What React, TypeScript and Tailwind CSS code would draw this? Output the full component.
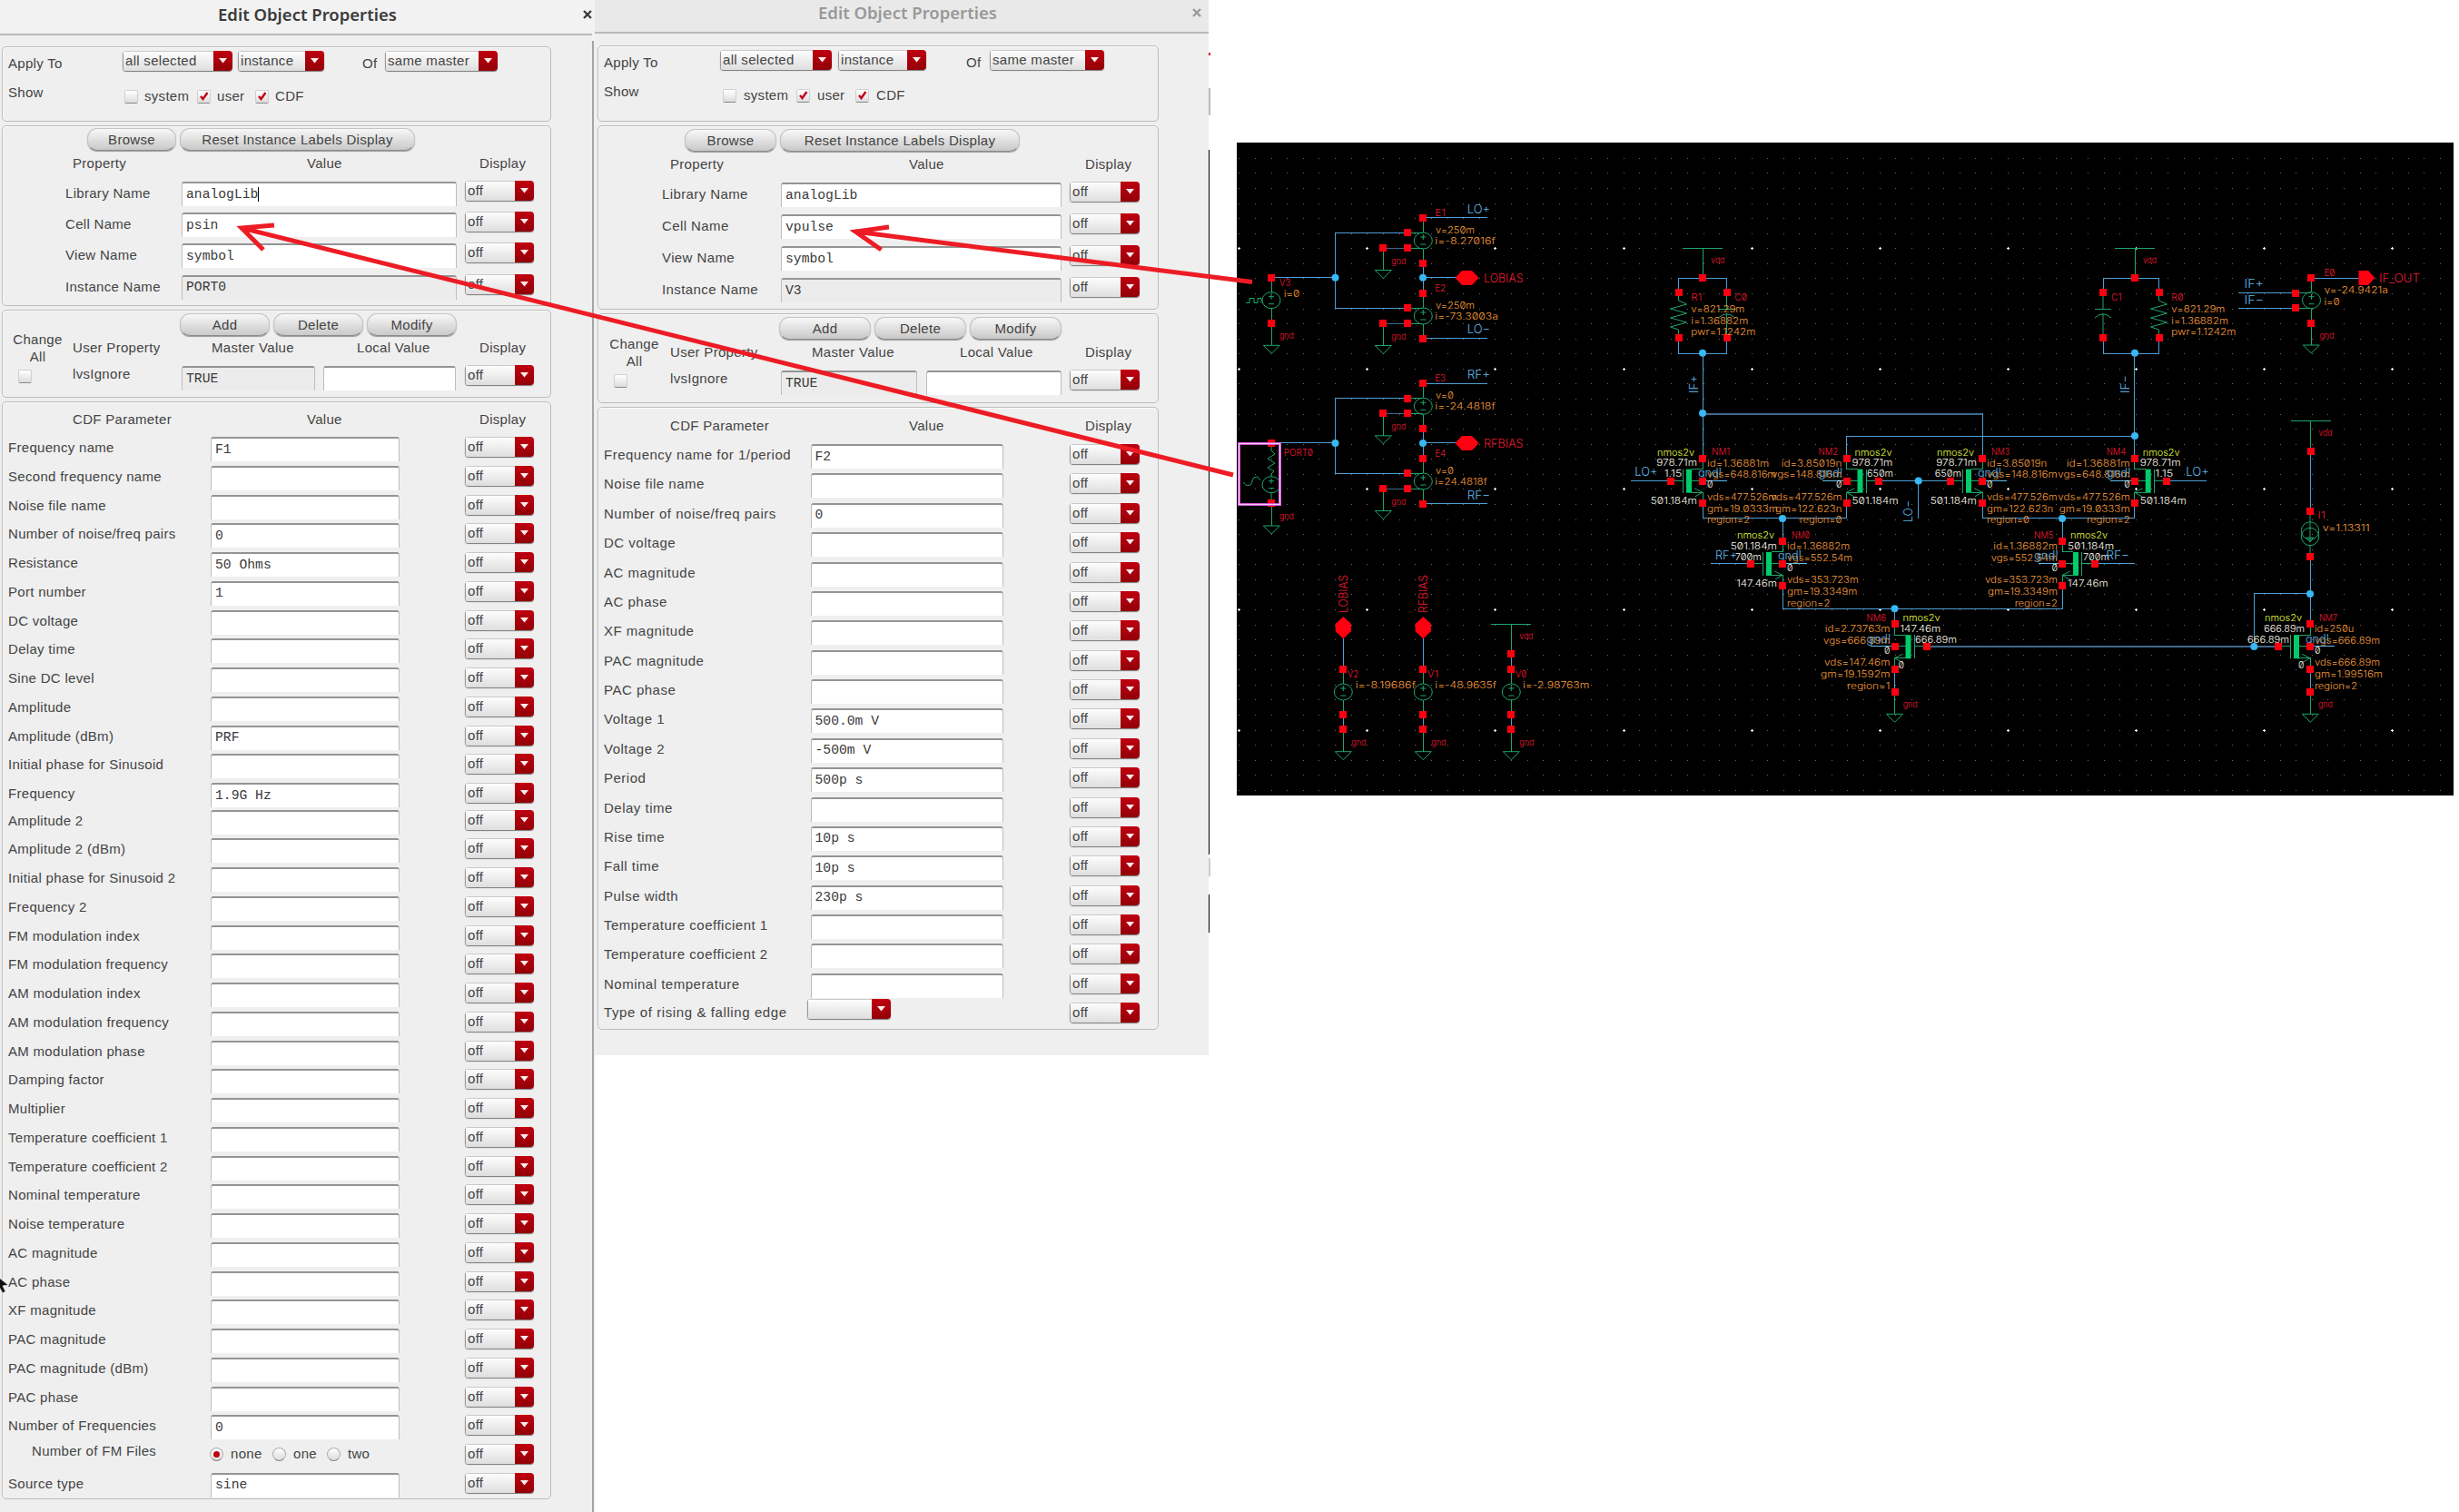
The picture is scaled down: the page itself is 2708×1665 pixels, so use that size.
import React from "react";

/* ---------- form widgets ---------- */

function Combo({ text, w, className = "" }: { text: string; w: string; className?: string }) {
  return (
    <div className={`flex h-[22px] shrink-0 overflow-hidden rounded-[4px] shadow-[0_1px_1px_#777] ${w} ${className}`}>
      <div className="flex-1 overflow-hidden border-t border-l border-t-[#c9c9c9] border-l-[#9a9a9a] bg-linear-to-b from-[#fdfdfd] to-[#dedede] pl-[2px] leading-[20px] whitespace-nowrap">
        {text}
      </div>
      <div className="flex w-[21px] items-center justify-center bg-linear-to-b from-[#c00010] to-[#920008]">
        <svg width="9" height="6" viewBox="0 0 9 6">
          <path d="M0 0H9L4.5 5.5Z" fill="#fbeaea" />
        </svg>
      </div>
    </div>
  );
}

function Field({ value = "", w, disabled = false, caret = false, className = "" }: { value?: string; w: string; disabled?: boolean; caret?: boolean; className?: string }) {
  return (
    <div
      className={`flex h-[27px] shrink-0 items-center overflow-hidden rounded-t-[3px] border-x border-t-2 border-x-[#bdbdbd] border-t-[#949494] pb-[2px] pl-[4px] font-['Liberation_Mono',monospace] text-[14.7px] tracking-normal whitespace-pre text-[#3a3a3a] ${disabled ? "bg-[#ececec]" : "bg-white"} ${w} ${className}`}
    >
      {value}
      {caret && <span className="h-[16px] w-px bg-black" />}
    </div>
  );
}

function Check({ on = false, className = "" }: { on?: boolean; className?: string }) {
  return (
    <div className={`size-[15px] shrink-0 rounded-[2px] border border-[#cfcfcf] border-b-[#8a8a8a] bg-linear-to-b from-white to-[#dcdcdc] ${className}`}>
      {on && (
        <svg width="13" height="13" viewBox="0 0 13 13">
          <path d="M3 6L5.5 9L10.5 2" fill="none" stroke="#c4001a" strokeWidth="2.4" />
        </svg>
      )}
    </div>
  );
}

function Radio({ on = false }: { on?: boolean }) {
  return (
    <div className="flex size-[15px] items-center justify-center rounded-full border border-[#b0b0b0] border-b-[#808080] bg-linear-to-b from-white to-[#dcdcdc]">
      {on && <div className="size-[7px] rounded-full bg-[#c00010]" />}
    </div>
  );
}

function Btn({ text, w }: { text: string; w: string }) {
  return (
    <div className={`flex h-[25px] shrink-0 items-center justify-center rounded-[11px] border border-[#c4c4c4] border-b-[#8c8c8c] bg-linear-to-b from-[#f8f8f8] to-[#c9c9c9] whitespace-nowrap shadow-[0_1px_1px_#999] ${w}`}>
      {text}
    </div>
  );
}

/* ---------- dialogs ---------- */

type Skin = {
  offW: string;
  groups: string; g1: string; g2: string; g3: string; g4: string;
  apply: string; comboA: string; comboB: string; comboC: string;
  show: string; opt: string;
  btns: string; browse: string; reset: string;
  head: string; propRow: string; propLabel: string; propField: string;
  left: string; userBtns: string; three: string; userHead: string; userRow: string; master: string; local: string;
  parHead: string; parCols: string; parField: string; parRow: string; parLabel: string;
};

const skinA: Skin = {
  offW: "w-[76px]",
  groups: "ml-[2px] w-[605px] pt-[12px]",
  g1: "h-[83px]", g2: "h-[199px] pt-[2px]", g3: "h-[97px]", g4: "h-[1209px] pt-[9px]",
  apply: "grid-cols-[132px_127px_137px_25px_124px] pt-[4px]",
  comboA: "w-[121px]", comboB: "w-[95px]", comboC: "w-[124px]",
  show: "grid-cols-[134px_80px_64px_60px] pt-[12px]", opt: "gap-[7px]",
  btns: "h-[29px] pl-[93px] gap-[4px]", browse: "w-[98px]", reset: "w-[259px]",
  head: "h-[29px] grid-cols-[258px_190px_60px] pl-[77px]",
  propRow: "h-[34.2px] grid-cols-[197px_312px_76px]", propLabel: "pl-[69px]", propField: "w-[303px]",
  left: "w-[77px] pt-[22px]", userBtns: "h-[31px] pl-[118px] gap-[4px]", three: "w-[99px]",
  userHead: "h-[29px] grid-cols-[153px_160px_135px_60px]",
  userRow: "grid-cols-[120px_156px_156px_76px]", master: "w-[147px]", local: "w-[146px]",
  parHead: "h-[29px] grid-cols-[258px_190px_60px] pl-[77px]",
  parCols: "grid-cols-[229px_280px_76px]", parField: "w-[208px]", parRow: "h-[31.75px]", parLabel: "mt-[2px] pl-[6px]",
};

const skinB: Skin = {
  offW: "w-[77px]",
  groups: "ml-[3px] w-[618px] pt-[13px]",
  g1: "h-[84px]", g2: "h-[203px] pt-[3px]", g3: "h-[99px]", g4: "h-[686px] pt-[10px]",
  apply: "grid-cols-[134px_130px_141px_26px_126px] pt-[4px]",
  comboA: "w-[123px]", comboB: "w-[97px]", comboC: "w-[126px]",
  show: "grid-cols-[137px_81px_65px_60px] pt-[12px]", opt: "gap-[8px]",
  btns: "h-[29px] pl-[95px] gap-[4px]", browse: "w-[101px]", reset: "w-[264px]",
  head: "h-[29px] grid-cols-[263px_194px_60px] pl-[79px]",
  propRow: "h-[35px] grid-cols-[201px_318px_77px]", propLabel: "pl-[70px] tracking-[0.4px]", propField: "w-[309px]",
  left: "w-[79px] pt-[23px]", userBtns: "h-[32px] pl-[120px] gap-[4px]", three: "w-[101px]",
  userHead: "h-[29px] grid-cols-[156px_163px_138px_60px]",
  userRow: "grid-cols-[122px_160px_158px_77px]", master: "w-[150px]", local: "w-[149px]",
  parHead: "h-[30px] grid-cols-[263px_194px_60px] pl-[79px]",
  parCols: "grid-cols-[233.5px_285.5px_77px]", parField: "w-[212px]", parRow: "h-[32.38px]", parLabel: "mt-[2px] pl-[6px] tracking-[0.5px]",
};

function Group({ className, children }: { className: string; children: React.ReactNode }) {
  return (
    <section className={`shrink-0 rounded-[5px] border border-[#bcbcbc] shadow-[inset_1px_1px_0_#fafafa] ${className}`}>
      {children}
    </section>
  );
}

type Param = { label: string; value?: string; kind?: "radio" | "combo" };

function ParamRow({ p, s, short }: { p: Param; s: Skin; short: boolean }) {
  return (
    <div className={`grid items-start ${s.parCols} ${short ? "h-[29.6px]" : s.parRow}`}>
      <span className={p.kind === "radio" ? "-mt-[2px] pl-[32px]" : p.kind === "combo" ? "mt-px pl-[6px] tracking-[0.6px]" : s.parLabel}>{p.label}</span>
      {p.kind === "radio" ? (
        <div className="-ml-px flex items-center pt-px">
          <Radio on /><span className="w-[47px] pl-[8px]">none</span>
          <span className="w-[7px]" />
          <Radio /><span className="w-[37px] pl-[8px]">one</span>
          <span className="w-[8px]" />
          <Radio /><span className="pl-[8px]">two</span>
        </div>
      ) : p.kind === "combo" ? (
        <Combo text="" w="w-[92px]" className="-mt-[4px] -ml-[4px]" />
      ) : (
        <Field value={p.value} w={s.parField} />
      )}
      <Combo text="off" w={s.offW} />
    </div>
  );
}

function Dialog({ s, active, name, cell, instance, params, shortRow }: { s: Skin; active: boolean; name: string; cell: string; instance: string; params: Param[]; shortRow: number }) {
  const props = [
    { label: "Library Name", value: "analogLib" },
    { label: "Cell Name", value: cell },
    { label: "View Name", value: "symbol" },
    { label: "Instance Name", value: instance },
  ];
  return (
    <div className="flex flex-col font-['Liberation_Sans',Arial,sans-serif] text-[15px] leading-[20px] tracking-[0.3px] text-[#444]">
      <header
        className={`flex shrink-0 items-center border-b-2 border-[#b9b9b9] font-['Noto_Sans',sans-serif] text-[18.5px] tracking-normal ${active ? "h-[39px] bg-[#f2f2f2] pb-[5px] pl-[240px] font-semibold text-[#3b3b3b]" : "h-[37px] bg-[#e9e9e9] pb-[7px] pl-[246px] font-semibold text-[#999]"}`}
      >
        <h1 className="w-[400px] whitespace-nowrap">{name}</h1>
        <svg width="10" height="10" viewBox="0 0 10 10" className={active ? "ml-[4px]" : "ml-[12px]"}>
          <path d="M1 1L9 9M9 1L1 9" stroke="currentColor" strokeWidth="2.4" />
        </svg>
      </header>
      <div className={`flex flex-col gap-[4px] ${s.groups}`}>
        <Group className={s.g1}>
          <div className={`grid ${s.apply}`}>
            <span className="pt-[4px] pl-[6px]">Apply To</span>
            <Combo text="all selected" w={s.comboA} />
            <Combo text="instance" w={s.comboB} />
            <span className="pt-[4px]">Of</span>
            <Combo text="same master" w={s.comboC} />
          </div>
          <div className={`grid ${s.show}`}>
            <span className="pl-[6px]">Show</span>
            <label className={`flex items-center pt-[4px] ${s.opt}`}><Check />system</label>
            <label className={`flex items-center pt-[4px] ${s.opt}`}><Check on />user</label>
            <label className={`flex items-center pt-[4px] ${s.opt}`}><Check on />CDF</label>
          </div>
        </Group>

        <Group className={s.g2}>
          <div className={`flex ${s.btns}`}>
            <Btn text="Browse" w={s.browse} />
            <Btn text="Reset Instance Labels Display" w={s.reset} />
          </div>
          <div className={`grid ${s.head}`}>
            <span>Property</span><span>Value</span><span>Display</span>
          </div>
          {props.map((p, i) => (
            <div key={p.label} className={`grid items-start ${s.propRow}`}>
              <span className={`mt-[4px] ${s.propLabel}`}>{p.label}</span>
              <Field value={p.value} w={s.propField} disabled={i === 3} caret={active && i === 0} className="mt-px" />
              <Combo text="off" w={s.offW} />
            </div>
          ))}
        </Group>

        <Group className={`flex ${s.g3}`}>
          <div className={`shrink-0 text-center leading-[19px] ${s.left}`}>
            Change<br />All
            <Check className="mt-[5px] ml-[17px]" />
          </div>
          <div className="pt-[3px]">
            <div className={`flex ${s.userBtns}`}>
              <Btn text="Add" w={s.three} /><Btn text="Delete" w={s.three} /><Btn text="Modify" w={s.three} />
            </div>
            <div className={`-mt-[3px] grid ${s.userHead}`}>
              <span>User Property</span><span>Master Value</span><span>Local Value</span><span>Display</span>
            </div>
            <div className={`grid items-start ${s.userRow}`}>
              <span>lvsIgnore</span>
              <Field value="TRUE" w={s.master} disabled className="mt-px" />
              <Field w={s.local} className="mt-px" />
              <Combo text="off" w={s.offW} />
            </div>
          </div>
        </Group>

        <Group className={s.g4}>
          <div className={`grid ${s.parHead}`}>
            <span>CDF Parameter</span><span>Value</span><span>Display</span>
          </div>
          {params.map((p, i) => (
            <ParamRow key={p.label} p={p} s={s} short={i === shortRow} />
          ))}
        </Group>
      </div>
    </div>
  );
}

const portParams: Param[] = [
  { label: "Frequency name", value: "F1" },
  { label: "Second frequency name" },
  { label: "Noise file name" },
  { label: "Number of noise/freq pairs", value: "0" },
  { label: "Resistance", value: "50 Ohms" },
  { label: "Port number", value: "1" },
  { label: "DC voltage" },
  { label: "Delay time" },
  { label: "Sine DC level" },
  { label: "Amplitude" },
  { label: "Amplitude (dBm)", value: "PRF" },
  { label: "Initial phase for Sinusoid" },
  { label: "Frequency", value: "1.9G Hz" },
  { label: "Amplitude 2" },
  { label: "Amplitude 2 (dBm)" },
  { label: "Initial phase for Sinusoid 2" },
  { label: "Frequency 2" },
  { label: "FM modulation index" },
  { label: "FM modulation frequency" },
  { label: "AM modulation index" },
  { label: "AM modulation frequency" },
  { label: "AM modulation phase" },
  { label: "Damping factor" },
  { label: "Multiplier" },
  { label: "Temperature coefficient 1" },
  { label: "Temperature coefficient 2" },
  { label: "Nominal temperature" },
  { label: "Noise temperature" },
  { label: "AC magnitude" },
  { label: "AC phase" },
  { label: "XF magnitude" },
  { label: "PAC magnitude" },
  { label: "PAC magnitude (dBm)" },
  { label: "PAC phase" },
  { label: "Number of Frequencies", value: "0" },
  { label: "Number of FM Files", kind: "radio" },
  { label: "Source type", value: "sine" },
];

const pulseParams: Param[] = [
  { label: "Frequency name for 1/period", value: "F2" },
  { label: "Noise file name" },
  { label: "Number of noise/freq pairs", value: "0" },
  { label: "DC voltage" },
  { label: "AC magnitude" },
  { label: "AC phase" },
  { label: "XF magnitude" },
  { label: "PAC magnitude" },
  { label: "PAC phase" },
  { label: "Voltage 1", value: "500.0m V" },
  { label: "Voltage 2", value: "-500m V" },
  { label: "Period", value: "500p s" },
  { label: "Delay time" },
  { label: "Rise time", value: "10p s" },
  { label: "Fall time", value: "10p s" },
  { label: "Pulse width", value: "230p s" },
  { label: "Temperature coefficient 1" },
  { label: "Temperature coefficient 2" },
  { label: "Nominal temperature" },
  { label: "Type of rising & falling edge", kind: "combo" },
];

/* ---------- schematic ---------- */

const WIRE = "#4d9fd6";
const DIM = "#41688c";
const GRN = "#1ea56c";
const RED = "#ec1832";
const AMB = "#f39a3c";
const WHT = "#fbf6ea";
const YEL = "#e2fa42";
const BLU = "#62b8ea";

function T({ x, e, y, t, c = AMB, s = 10 }: { x: number; e: number; y: number; t: string; c?: string; s?: number }) {
  return (
    <text x={x} y={y + s * 0.36} fontSize={s} fill={c} textLength={e - x} lengthAdjust="spacingAndGlyphs">
      {t}
    </text>
  );
}

function VT({ x, y, h, t, c, s = 13 }: { x: number; y: number; h: number; t: string; c: string; s?: number }) {
  return (
    <text transform={`translate(${x + s * 0.36} ${y}) rotate(-90)`} fontSize={s} fill={c} textLength={h} lengthAdjust="spacingAndGlyphs">
      {t}
    </text>
  );
}

const L = ({ d, c = WIRE, w = 1 }: { d: string; c?: string; w?: number }) => (
  <path d={d} fill="none" stroke={c} strokeWidth={w} shapeRendering="crispEdges" />
);
const Pin = ({ x, y }: { x: number; y: number }) => <rect x={Math.round(x - 4)} y={Math.round(y - 4)} width="8" height="8" fill="#ff0010" />;
const Dot = ({ x, y }: { x: number; y: number }) => <circle cx={x} cy={y} r="4" fill="#38b8f4" />;

function Gnd({ x, y, top, lx }: { x: number; y: number; top: number; lx: number }) {
  return (
    <g>
      <L d={`M${x} ${top}V${y}`} c={GRN} />
      <path d={`M${x - 9} ${y}H${x + 9}L${x} ${y + 9}Z`} fill="none" stroke={GRN} />
      <T x={lx} e={lx + 16} y={y - 10.3} t="gnd" c={RED} s={9.5} />
    </g>
  );
}

function Vdd({ x, y, pin }: { x: number; y: number; pin: number }) {
  return (
    <g>
      <L d={`M${x - 22} ${y}H${x + 22}M${x} ${y}V${pin}`} c={GRN} />
      <T x={x + 9} e={x + 24} y={y + 13.5} t="vdd" c={RED} s={9.5} />
      <Pin x={x} y={pin} />
    </g>
  );
}

function Source({ x, y }: { x: number; y: number }) {
  return (
    <g fill="none" stroke={GRN}>
      <ellipse cx={x} cy={y} rx="10" ry="9" />
      <path d={`M${x - 3} ${y - 4}H${x + 3}M${x} ${y - 7}V${y - 1}M${x - 3} ${y + 4}H${x + 3}`} />
    </g>
  );
}

/* voltage-controlled source: output pins above/below, control pins on the left */
function Vcvs({ y, name, v, i, iEnd, vEnd }: { y: number; name: string; v: string; i: string; iEnd: number; vEnd: number }) {
  return (
    <g>
      <L d={`M1567 ${y}V${y + 16}M1567 ${y + 34}V${y + 50}M1550 ${y + 16.6}H1567M1550 ${y + 33.6}H1567`} c={GRN} />
      <L d={`M1523 ${y + 33.6}H1550`} c={DIM} />
      <Source x={1567.3} y={y + 25.3} />
      <Gnd x={1523.3} top={y + 34} y={y + 57.8} lx={1532.3} />
      <Pin x={1567} y={y} /><Pin x={1567} y={y + 50} />
      <Pin x={1550} y={y + 16.6} /><Pin x={1550} y={y + 33.3} /><Pin x={1523} y={y + 33.3} />
      <T x={1580.3} e={1592} y={y - 5.4} t={name} c={RED} s={10.5} />
      <T x={1581} e={vEnd} y={y + 13.7} t={v} />
      <T x={1580.3} e={iEnd} y={y + 25.8} t={i} />
    </g>
  );
}

const Resistor = ({ x, y }: { x: number; y: number }) => (
  <path d={`M${x} ${y}V${y + 5}L${x + 9} ${y + 9}L${x - 9} ${y + 14}L${x + 9} ${y + 19}L${x - 9} ${y + 24}L${x + 9} ${y + 29}L${x - 9} ${y + 34}L${x} ${y + 37}V${y + 45}`} fill="none" stroke={GRN} />
);

const Cap = ({ x }: { x: number }) => (
  <path d={`M${x} 322V340.5M${x - 9} 340.5H${x + 9}M${x - 9} 350Q${x} 341.5 ${x + 9} 350M${x} 345.5V372`} fill="none" stroke={GRN} />
);

type Mos = {
  x: number; y: number; m: 1 | -1; gate: number; name: string; top: string; g: string; gX: [number, number]; bot: string;
  id: string; vgs: string; vds: string; gm: string; region: string; ends: number[];
};

/* MOS transistor; y is the drain pin, m = 1 puts the gate on the left, -1 on the right */
function Nmos({ x, y, m, gate, name, top, g, gX, bot, id, vgs, vds, gm, region, ends }: Mos) {
  const span = (far: number, near = 5) => (m === 1 ? { x: x + near, e: far } : { x: far, e: x - near });
  const side = (w: number, near = 6) => (m === 1 ? { x: x - near - w, e: x - near } : { x: x + near, e: x + near + w });
  const bulk = m === 1 ? { x: x - 5, e: x + 21 } : { x: x - 31, e: x - 4 };
  const cx = m === 1 ? x - 18 : x + 12;
  return (
    <g>
      <L d={`M${x} ${y}V${y + 12}H${x - 12 * m}M${x - 12 * m} ${y + 37.5}H${x}V${y + 49}M${x} ${y + 24.6}H${x - 12 * m}M${x - 21.5 * m} ${y + 12}V${y + 38}M${x - 21.5 * m} ${y + 24.6}H${gate}`} c={GRN} />
      <path d={`M${x - 9 * m} ${y + 33}L${x} ${y + 37.5}L${x - 8 * m} ${y + 42}`} fill="none" stroke={GRN} />
      <rect x={cx} y={y + 12} width="6" height="26" fill="#00cc6a" />
      <L d={`M${x} ${y + 24.6}H${x + 26.5 * m}`} c={BLU} />
      <T {...(m === 1 ? { x: x + 10, e: x + 30 } : { x: x - 31, e: x - 9.5 })} y={y - 7} t={name} c={RED} s={10.5} />
      <T {...side(41, 9)} y={y - 6.6} t="nmos2v" c={YEL} />
      <T {...side(top.length * 6.4)} y={y + 5} t={top} c={WHT} />
      <T x={gX[0]} e={gX[1]} y={y + 17} t={g} c={WHT} />
      {bot === "0" ? (
        <T {...(m === 1 ? { x: x - 13, e: x - 6.5 } : { x: x + 4, e: x + 10.5 })} y={y + 45.5} t="0" c={WHT} />
      ) : (
        <T {...side(bot.length * 6.4)} y={y + 46.5} t={bot} c={WHT} />
      )}
      <T {...span(x + 11.5 * m)} y={y + 29} t="0" c={WHT} />
      <T {...span(ends[0])} y={y + 5.3} t={id} />
      <T {...span(ends[1])} y={y + 18} t={vgs} />
      <T {...bulk} y={y + 16} t="gnd!" c={BLU} s={12.5} />
      <T {...span(ends[2])} y={y + 42.5} t={vds} />
      <T {...span(ends[3])} y={y + 55.5} t={gm} />
      <T {...span(ends[4])} y={y + 68} t={region} />
      <Pin x={x} y={y} /><Pin x={x} y={y + 24.8} /><Pin x={x} y={y + 49.5} /><Pin x={gate} y={y + 24.8} />
    </g>
  );
}

function gridPaths() {
  let minor = "";
  let major = "";
  for (let i = 0; i <= 75; i++) {
    for (let j = -6; j <= 36; j++) {
      const x = Math.round(1364.3 + i * 17.634);
      const y = Math.round(273.3 + j * 16.57);
      if (i % 8 === 0 && j % 8 === 0) major += `M${x - 1} ${y}h3v1h-3zM${x} ${y - 1}h1v3h-1z`;
      else minor += `M${x} ${y}h1v1h-1z`;
    }
  }
  return { minor, major };
}

function Load({ x, l, r }: { x: number; l: number; r: number }) {
  return (
    <g>
      <L d={`M${l} 322V306H${r}V322M${l} 372V389H${r}V372`} />
      <Vdd x={x} y={273.5} pin={306} />
    </g>
  );
}

function Schematic() {
  const { minor, major } = gridPaths();
  return (
    <svg
      width="1340"
      height="719"
      viewBox="1362 157 1340 719"
      className="block shrink-0 bg-black font-['Inter',sans-serif] font-light [font-feature-settings:'zero']"
    >
      <path d={minor} fill="#6a6a6a" shapeRendering="crispEdges" />
      <path d={major} fill="#ffffff" shapeRendering="crispEdges" />

      {/* LO and RF drive wiring */}
      <L d="M1400 305.5H1470.5M1550 256.5H1470.5V339.5H1550M1567 290V323M1567 305.5H1603" />
      <L d="M1400 487.5H1470.5M1550 438.5H1470.5V521.5H1550M1567 472V505M1567 487.5H1603" />
      <L d="M1567 239.5H1638M1567 372.5H1638M1567 422.5H1638M1567 554.5H1638" />

      <L d="M1400.5 306V322M1400.5 340V356" c={GRN} />
      <Source x={1400} y={330.7} />
      <path d="M1372 333.5H1376V328.5H1381V333.5H1385V328.5H1389V333.5" fill="none" stroke={GRN} />
      <Gnd x={1400.3} top={356} y={380.3} lx={1409} />
      <Pin x={1400} y={305.7} /><Pin x={1400} y={355.7} />
      <T x={1409} e={1421.5} y={311.3} t="V3" c={RED} s={10.5} />
      <T x={1413.7} e={1431.3} y={323.7} t="i=0" />

      <Vcvs y={239.7} name="E1" v="v=250m" vEnd={1624} i="i=-8.27016f" iEnd={1646.7} />
      <Vcvs y={322.7} name="E2" v="v=250m" vEnd={1624} i="i=-73.3003a" iEnd={1650} />
      <Vcvs y={422} name="E3" v="v=0" vEnd={1601} i="i=-24.4818f" iEnd={1646.7} />
      <Vcvs y={504.7} name="E4" v="v=0" vEnd={1601} i="i=24.4818f" iEnd={1637.7} />
      <Dot x={1470.5} y={305.7} /><Dot x={1567} y={305.7} /><Dot x={1470.5} y={488} /><Dot x={1567} y={488} />
      <path d="M1602.5 306L1610 298H1621L1628.7 306L1621 314H1610ZM1602.5 488L1610 480H1621L1628.7 488L1621 496H1610Z" fill="#ff0010" />
      <T x={1634} e={1677.5} y={306} t="LOBIAS" c={RED} s={13} />
      <T x={1634} e={1677.5} y={488.3} t="RFBIAS" c={RED} s={13} />
      <T x={1615.7} e={1641} y={230} t="LO+" c={BLU} s={13} />
      <T x={1615.7} e={1641} y={362.7} t="LO−" c={BLU} s={13} />
      <T x={1615.7} e={1641} y={412.7} t="RF+" c={BLU} s={13} />
      <T x={1615.7} e={1641} y={545.3} t="RF−" c={BLU} s={13} />

      {/* RF port */}
      <path d="M1400 492V496L1404 500L1396 505L1404 510L1396 515L1403 519L1400 522V525M1400 542V554" fill="none" stroke={GRN} />
      <Source x={1400} y={533.7} />
      <path d="M1369.5 531Q1371 535 1375 534.5Q1379 534 1379 529Q1380 525 1384 525Q1387 526 1387.5 529" fill="none" stroke={GRN} />
      <Gnd x={1400.3} top={554} y={579} lx={1409} />
      <Pin x={1400} y={488} /><Pin x={1400} y={554.3} />
      <rect x="1364.5" y="488.5" width="45" height="67" fill="none" stroke="#d25bd2" strokeWidth="3" />
      <rect x="1364.5" y="488.5" width="45" height="67" fill="none" stroke="#f4c9f4" strokeWidth="1" />
      <T x={1413.7} e={1446} y={498} t="PORT0" c={RED} s={10.5} />

      {/* bias sources */}
      {[
        { x: 1479.3, n: "V2", i: "i=-8.19686f", ix: 1492.7, ie: 1559, t: "LOBIAS" },
        { x: 1567.3, n: "V1", i: "i=-48.9635f", ix: 1580.3, ie: 1648, t: "RFBIAS" },
        { x: 1664.3, n: "V0", i: "i=-2.98763m", ix: 1677, ie: 1750.3, t: "" },
      ].map((b) => (
        <g key={b.n}>
          <L d={`M${b.x} 703V737M${b.x} 787V803`} />
          <L d={`M${b.x} 737V753M${b.x} 771V787`} c={GRN} />
          <Source x={b.x} y={762} />
          <Gnd x={b.x} top={803} y={827.7} lx={b.x + 9} />
          <Pin x={b.x} y={737} /><Pin x={b.x} y={786.7} /><Pin x={b.x} y={803} />
          <T x={b.x + 4.5} e={b.x + 17} y={742} t={b.n} c={RED} s={10.5} />
          <T x={b.ix} e={b.ie} y={754.3} t={b.i} />
          {b.t ? (
            <>
              <path d={`M${b.x} 679L${b.x + 8.7} 687V695L${b.x} 703.5L${b.x - 8.7} 695V687Z`} fill="#ff0010" />
              <VT x={b.x} y={675} h={42} t={b.t} c={RED} />
            </>
          ) : (
            <Vdd x={b.x} y={687.5} pin={720} />
          )}
        </g>
      ))}

      {/* mixer core wiring */}
      <L d="M1875.5 389V505M2350.5 389V505M2033.5 505V480.5H2350.5M1963.5 571V596M2271.5 571V596" />
      <L d="M1875.5 455.5H2183.5" c={DIM} w={2} />
      <L d="M2183.5 455V505M1875.5 554V570.5H2033.5V554M2183.5 554V570.5H2350.5V554" />
      <L d="M1963.5 645V670.5H2271.5V645M2086.5 670V687M2086.5 737V762" />
      <L d="M1796 529.5H1840M2068 529.5H2148M2112.5 529V571M2386 529.5H2430M1884 620.5H1928M2306 620.5H2351" />
      <L d="M2122 712H2508" c={DIM} w={2} />
      <L d="M2544.5 497V563M2544.5 613V687M2544.5 653.5H2482.5V712M2544.5 737V762" />

      {/* loads */}
      <Load x={1875.3} l={1848.5} r={1901.5} />
      <Load x={2351} l={2316} r={2377.5} />
      <Resistor x={1848.5} y={326} /><Resistor x={2377.5} y={326} />
      <Cap x={1901.5} /><Cap x={2316} />
      <Pin x={1848.5} y={322.3} /><Pin x={1901.7} y={322.3} /><Pin x={1848.5} y={372.3} /><Pin x={1901.7} y={372.3} />
      <Pin x={2316} y={322.3} /><Pin x={2377.5} y={322.3} /><Pin x={2316} y={372.3} /><Pin x={2377.5} y={372.3} />
      <T x={1862.3} e={1874.3} y={327.7} t="R1" c={RED} s={10.5} />
      <T x={1910.3} e={1924} y={327.7} t="C0" c={RED} s={10.5} />
      <T x={1862.3} e={1921.3} y={340.3} t="v=821.29m" />
      <T x={1862.3} e={1925.3} y={353} t="i=1.36882m" />
      <T x={1862.3} e={1933.3} y={365.3} t="pwr=1.1242m" />
      <T x={2325} e={2336.7} y={327.7} t="C1" c={RED} s={10.5} />
      <T x={2391.3} e={2404.5} y={327.7} t="R0" c={RED} s={10.5} />
      <T x={2391.3} e={2450.3} y={340.3} t="v=821.29m" />
      <T x={2391.3} e={2454} y={353} t="i=1.36882m" />
      <T x={2391.3} e={2462.4} y={365.3} t="pwr=1.1242m" />
      <VT x={1865.7} y={433} h={20} t="IF+" c={BLU} />
      <VT x={2340.5} y={433} h={20} t="IF−" c={BLU} />
      <VT x={2101.7} y={575} h={24} t="LO−" c={BLU} />

      {/* transistors */}
      <Nmos x={1875} y={504.7} m={1} gate={1840} name="NM1" top="978.71m" g="1.15" gX={[1832.7, 1852.3]} bot="501.184m" id="id=1.36881m" vgs="vgs=648.816m" vds="vds=477.526m" gm="gm=19.0333m" region="region=2" ends={[1948.3, 1956, 1957, 1958, 1927]} />
      <Nmos x={2033.5} y={504.7} m={-1} gate={2068.7} name="NM2" top="978.71m" g="650m" gX={[2056, 2085]} bot="501.184m" id="id=3.85019n" vgs="vgs=148.816m" vds="vds=477.526m" gm="gm=122.623n" region="region=0" ends={[1961.7, 1951, 1950, 1955, 1981.7]} />
      <Nmos x={2183} y={504.7} m={1} gate={2148} name="NM3" top="978.71m" g="650m" gX={[2130.7, 2160]} bot="501.184m" id="id=3.85019n" vgs="vgs=148.816m" vds="vds=477.526m" gm="gm=122.623n" region="region=0" ends={[2254.3, 2265.7, 2265.7, 2261.3, 2235]} />
      <Nmos x={2350.7} y={504.7} m={-1} gate={2386} name="NM4" top="978.71m" g="1.15" gX={[2373.3, 2393.3]} bot="501.184m" id="id=1.36881m" vgs="vgs=648.816m" vds="vds=477.526m" gm="gm=19.0333m" region="region=2" ends={[2275.7, 2266.3, 2266.3, 2267.7, 2298]} />
      <Nmos x={1963} y={595.9} m={1} gate={1927.7} name="NM0" top="501.184m" g="700m" gX={[1910.7, 1940]} bot="147.46m" id="id=1.36882m" vgs="vgs=552.54m" vds="vds=353.723m" gm="gm=19.3349m" region="region=2" ends={[2037.3, 2040, 2046.7, 2045.3, 2015.3]} />
      <Nmos x={2271} y={595.9} m={-1} gate={2306.7} name="NM5" top="501.184m" g="700m" gX={[2294, 2323]} bot="147.46m" id="id=1.36882m" vgs="vgs=552.54m" vds="vds=353.723m" gm="gm=19.3349m" region="region=2" ends={[2195.3, 2192.7, 2186, 2189, 2218.7]} />
      <Nmos x={2086.5} y={687.2} m={-1} gate={2122} name="NM6" top="147.46m" g="666.89m" gX={[2109, 2155]} bot="0" id="id=2.73763m" vgs="vgs=666.89m" vds="vds=147.46m" gm="gm=19.1592m" region="region=1" ends={[2009.7, 2008, 2009, 2005, 2034]} />
      <Nmos x={2544} y={687.2} m={1} gate={2508.7} name="NM7" top="666.89m" g="666.89m" gX={[2475, 2521]} bot="0" id="id=250u" vgs="vgs=666.89m" vds="vds=666.89m" gm="gm=1.99516m" region="region=2" ends={[2592.3, 2621, 2621, 2624, 2596]} />
      <T x={1800.3} e={1825.3} y={519.7} t="LO+" c={BLU} s={13} />
      <T x={2407.3} e={2432.7} y={519.7} t="LO+" c={BLU} s={13} />
      <T x={1889} e={1913} y={611} t="RF+" c={BLU} s={13} />
      <T x={2319.3} e={2345} y={611} t="RF−" c={BLU} s={13} />
      <Gnd x={2086.5} top={762} y={786.3} lx={2095.7} />
      <Gnd x={2544.3} top={762} y={786.3} lx={2553} />
      <Pin x={2086.5} y={762} /><Pin x={2544} y={762} />
      <Dot x={1875} y={388.7} /><Dot x={2351} y={388.7} /><Dot x={1875} y={455} /><Dot x={2351} y={480} />
      <Dot x={1963} y={571} /><Dot x={2271} y={571} /><Dot x={2112.7} y={529.5} /><Dot x={2086.5} y={670.3} />
      <Dot x={2482.3} y={712} /><Dot x={2544} y={654} />

      {/* reference current */}
      <Vdd x={2544.5} y={463.5} pin={497} />
      <g fill="none" stroke={GRN}>
        <circle cx="2544" cy="584.5" r="9.7" />
        <circle cx="2544" cy="591" r="9.7" />
        <path d="M2544 563V596M2544 600V613M2540 592H2548L2544 597Z" />
      </g>
      <Pin x={2544} y={562.7} /><Pin x={2544} y={612.7} />
      <T x={2552.3} e={2561} y={567.7} t="I1" c={RED} s={10.5} />
      <T x={2557.7} e={2609.7} y={581} t="v=1.13311" />

      {/* output buffer */}
      <L d="M2465 322.5H2528M2465 339.5H2528M2545 306.5H2598" />
      <L d="M2528 322.5H2545M2528 339.5H2545M2545.5 306V322M2545.5 340V356" c={GRN} />
      <Source x={2545.5} y={330.7} />
      <Gnd x={2545.3} top={356} y={380} lx={2554.5} />
      <Pin x={2545} y={305.7} /><Pin x={2528.3} y={322.5} /><Pin x={2528.3} y={339.3} /><Pin x={2545} y={355.7} />
      <path d="M2597.5 298H2608L2615.5 306L2608 314H2597.5Z" fill="#ff0010" />
      <T x={2620} e={2665} y={306} t="IF_OUT" c={RED} s={13} />
      <T x={2559.4} e={2571.5} y={300} t="E0" c={RED} s={10.5} />
      <T x={2559.4} e={2630} y={319.7} t="v=-24.9421a" />
      <T x={2559.4} e={2576.7} y={332} t="i=0" />
      <T x={2471.4} e={2493} y={312.7} t="IF+" c={BLU} s={13} />
      <T x={2471.4} e={2493} y={330} t="IF−" c={BLU} s={13} />
    </svg>
  );
}

export default function App() {
  return (
    <main className="relative flex h-[1665px] w-[2708px] items-start overflow-hidden bg-white">
      <div className="h-[1665px] w-[652px] shrink-0 bg-[#efefef]">
        <Dialog s={skinA} active name="Edit Object Properties" cell="psin" instance="PORT0" params={portParams} shortRow={12} />
      </div>
      <div className="flex h-[1665px] w-[3px] shrink-0 flex-col">
        <div className="h-[45px] bg-[#f2f2f2]" />
        <div className="flex-1 border-r border-r-[#efefef] bg-[#a5a5a5]" />
      </div>
      <div className="h-[1162px] w-[676px] shrink-0 bg-[#efefef]">
        <Dialog s={skinB} active={false} name="Edit Object Properties" cell="vpulse" instance="V3" params={pulseParams} shortRow={-1} />
      </div>
      <div className="flex w-[2px] shrink-0 flex-col">
        <div className="mt-[58px] h-[3px] bg-[#d2142c]" />
        <div className="mt-[36px] h-[30px] bg-[#bbb]" />
        <div className="mt-[38px] h-[776px] w-[1px] bg-black" />
        <div className="mt-[4px] h-[20px] bg-[#ccc]" />
        <div className="mt-[20px] h-[42px] w-[1px] bg-black" />
      </div>
      <div className="mt-[157px] ml-[29px]">
        <Schematic />
      </div>

      {/* annotation arrows and pointer */}
      <svg width="1400" height="1665" viewBox="0 0 1400 1665" className="pointer-events-none absolute top-0 left-0">
        <g fill="none" stroke="#ed1c24" strokeWidth="5">
          <path d="M1358 523L266 251M302 248L266 251L290 275" />
          <path d="M1379 310.5L942 255M979 250L942 255L970.5 275" />
        </g>
        <path d="M-6 1403L-6 1422L-1 1417L3 1424L6 1422L3 1416L9 1415Z" fill="#111" stroke="#ddd" strokeWidth="0.8" />
      </svg>
    </main>
  );
}
